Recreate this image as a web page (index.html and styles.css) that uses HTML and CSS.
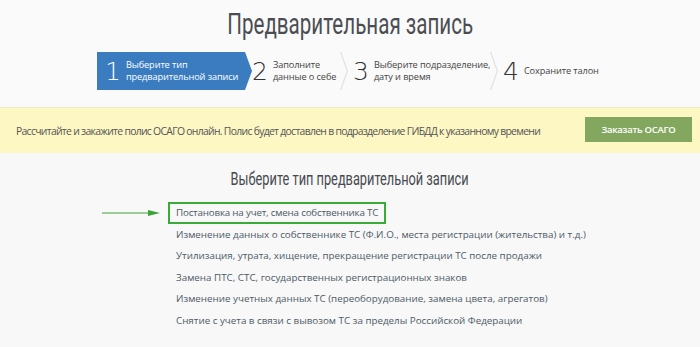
FILE: index.html
```html
<!DOCTYPE html>
<html lang="ru">
<head>
<meta charset="utf-8">
<link rel="stylesheet" href="styles.css">
</head>
<body>
<div class="page">
  <h1 class="title"><span class="cond">Предварительная запись</span></h1>
  <div class="steps">
    <div class="step active"><span class="num">1</span><span class="lbl">Выберите тип<br>предварительной записи</span></div>
    <div class="step"><span class="num">2</span><span class="lbl">Заполните<br>данные о себе</span></div>
    <div class="step"><span class="num">3</span><span class="lbl">Выберите подразделение,<br>дату и время</span></div>
    <div class="step last"><span class="num">4</span><span class="lbl">Сохраните талон</span></div>
  </div>
  <div class="promo">
    <span class="promo-text">Рассчитайте и закажите полис ОСАГО онлайн. Полис будет доставлен в подразделение ГИБДД к указанному времени</span>
    <a class="btn">Заказать ОСАГО</a>
  </div>
  <div class="choose">
    <h2 class="subtitle"><span class="cond">Выберите тип предварительной записи</span></h2>
    <ul class="types">
      <li class="type selected">
        <svg class="arrow" width="60" height="8" viewBox="0 0 60 8"><line x1="0" y1="4" x2="52" y2="4" stroke="#3aa335" stroke-width="1.2"/><path d="M46 1 L58 4 L46 7 Z" fill="#3aa335"/></svg>
        <span class="box">Постановка на учет, смена собственника ТС</span>
      </li>
      <li class="type"><span class="box">Изменение данных о собственнике ТС (Ф.И.О., места регистрации (жительства) и т.д.)</span></li>
      <li class="type"><span class="box">Утилизация, утрата, хищение, прекращение регистрации ТС после продажи</span></li>
      <li class="type"><span class="box">Замена ПТС, СТС, государственных регистрационных знаков</span></li>
      <li class="type"><span class="box">Изменение учетных данных ТС (переоборудование, замена цвета, агрегатов)</span></li>
      <li class="type"><span class="box">Снятие с учета в связи с вывозом ТС за пределы Российской Федерации</span></li>
    </ul>
  </div>
</div>
</body>
</html>
```

FILE: styles.css
```css
* { box-sizing: border-box; }
html, body { margin: 0; padding: 0; }
body {
  background: #f8f8f8;
  font-family: "Open Sans", "DejaVu Sans", sans-serif;
  color: #555;
  width: 700px;
  overflow: hidden;
}
.page { display: flex; flex-direction: column; }
.cond {
  display: inline-block;
  transform: scaleX(0.71);
  transform-origin: center;
  white-space: nowrap;
}
.title {
  margin: 0;
  padding-top: 7px;
  height: 52px;
  text-align: center;
  font-family: Roboto, "Liberation Sans", sans-serif;
  font-weight: 400;
  font-size: 29px;
  color: #4a4d52;
  background: #fafafa;
}
.steps {
  display: flex;
  padding-left: 97px;
  height: 55px;
  padding-bottom: 17px;
  background: #fafafa;
}
.step {
  position: relative;
  display: flex;
  align-items: center;
  flex-shrink: 0;
  height: 38px;
  padding-left: 8px;
  color: #333;
}
.step:nth-child(1) { width: 148px; }
.step:nth-child(2) { width: 100px; padding-left: 7px; }
.step:nth-child(3) { width: 150px; padding-left: 8px; }
.step:nth-child(4) { width: 110px; padding-left: 8px; }
.step::after {
  content: "";
  position: absolute;
  right: -4px;
  top: 0;
  width: 9px;
  height: 38px;
  background: #e2e2e2;
  clip-path: polygon(0 0, 1.3px 0, 8px 50%, 1.3px 100%, 0 100%, 6.7px 50%);
  z-index: 1;
}
.step.last::after { display: none; }
.step.active { background: #3b7cc0; color: #fff; }
.step.active::after {
  right: -7px;
  width: 7px;
  background: #3b7cc0;
  clip-path: polygon(0 0, 7px 50%, 0 100%);
  z-index: 2;
}
.num {
  font-family: "DejaVu Sans", sans-serif;
  font-weight: 200;
  font-size: 25px;
  line-height: 1;
  margin-right: 5px;
}
.step:not(.active) .num { color: #333; }
.lbl {
  font-size: 9.2px;
  line-height: 12.5px;
  letter-spacing: -0.1px;
  white-space: nowrap;
}
.step:not(.active) .lbl { color: #444; }
.promo {
  display: flex;
  align-items: center;
  justify-content: space-between;
  height: 46px;
  padding: 0 8px 0 16px;
  background: #fdf7c3;
  border-top: 1px solid #eeeccc;
}
.promo-text {
  font-size: 10.4px;
  letter-spacing: -0.7px;
  color: #555;
  white-space: nowrap;
}
.btn {
  display: flex;
  align-items: center;
  justify-content: center;
  flex-shrink: 0;
  width: 107px;
  height: 25px;
  background: #84a760;
  color: #fff;
  font-size: 9.5px;
  font-weight: 600;
  letter-spacing: -0.3px;
  margin-top: -3px;
}
.choose {
  display: flex;
  flex-direction: column;
  background: #f8f8f8;
}
.subtitle {
  margin: 15px 0 0;
  text-align: center;
  font-family: Roboto, "Liberation Sans", sans-serif;
  font-weight: 400;
  font-size: 18px;
  color: #46494e;
  height: 34px;
}
.types {
  list-style: none;
  margin: 0;
  padding: 0 0 0 168px;
  display: flex;
  flex-direction: column;
}
.type {
  position: relative;
  height: 21.5px;
  display: flex;
  align-items: center;
}
.box {
  display: inline-block;
  padding: 2px 6px;
  border: 2px solid transparent;
  font-size: 9.8px;
  color: #4d5a66;
  white-space: nowrap;
}
.type.selected .box { border-color: #3aab36; height: 22px; letter-spacing: -0.2px; }
.arrow { position: absolute; left: -66px; top: 7px; }
```
